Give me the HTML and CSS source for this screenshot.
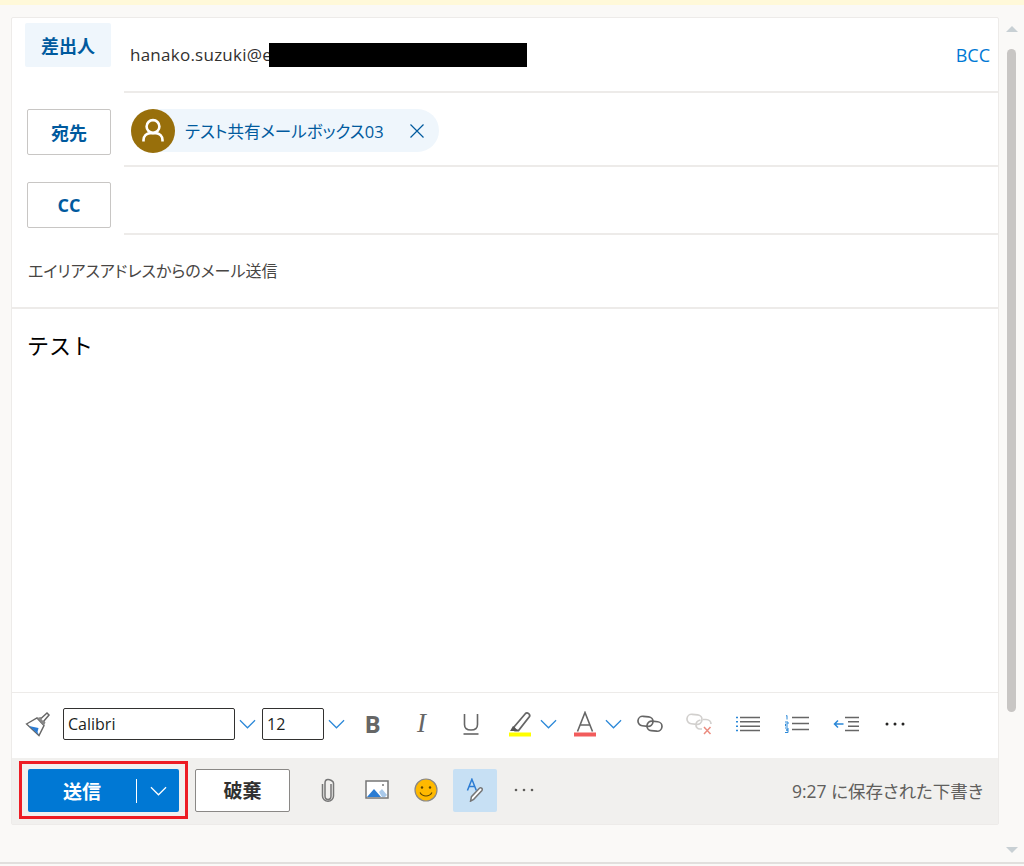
FILE: index.html
```html
<!DOCTYPE html>
<html lang="ja">
<head>
    <meta charset="UTF-8">
    <meta name="viewport" content="width=device-width, initial-scale=1.0">
    <title>メールの作成</title>
    <link rel="stylesheet" href="styles.css">
</head>
<body>
    <div class="notice"></div>
    <div class="main">
        <div class="composer">
            <div class="field-row from-row">
                <button class="field-btn active">差出人</button>
                <div class="field-value">
                    <span class="from-addr">hanako.suzuki@e</span><span class="redacted"></span>
                    <a class="bcc">BCC</a>
                </div>
            </div>
            <div class="field-row to-row">
                <button class="field-btn">宛先</button>
                <div class="field-value">
                    <div class="chip">
                        <span class="avatar">
                            <svg width="44" height="44" viewBox="0 0 44 44" fill="none" stroke="#fff" stroke-width="2.6">
                                <circle cx="22" cy="17.5" r="6.4"/>
                                <path d="M12.5 32.5v-1.5c0-4 3-6.8 6.5-6.8h6c3.5 0 6.500 2.800 6.500 6.800v1.500"/>
                            </svg>
                        </span>
                        <span class="chip-name">テスト共有メールボックス03</span>
                        <svg class="chip-x" width="16" height="16" viewBox="0 0 16 16" fill="none" stroke="#005a9e" stroke-width="1.200">
                            <path d="M1.500 1.500l13 13M14.500 1.500l-13 13"/>
                        </svg>
                    </div>
                </div>
            </div>
            <div class="field-row cc-row">
                <button class="field-btn">CC</button>
                <div class="field-value"></div>
            </div>
            <div class="subject">エイリアスアドレスからのメール送信</div>
            <div class="body-text">テスト</div>

            <div class="format-bar">
                <span class="tool brush">
                    <svg width="26" height="26" viewBox="0 0 26 26">
                        <path d="M1.500 13L12 7l7 7.500L14 24.500z" fill="#fff" stroke="#666" stroke-width="1.400"/>
                        <path d="M4 15l9.500 2-1 4 1.500 3z" fill="#2b7cd3"/>
                        <path d="M12 7l7 7.500 1.500-3-5-5.500z" fill="#888"/>
                        <path d="M16 7.500l6-5.500 2 2-5.500 6.500" fill="#fff" stroke="#666" stroke-width="1.500"/>
                    </svg>
                </span>
                <input class="font-input" type="text" value="Calibri">
                <span class="menu first-menu"><svg class="chev" width="17" height="10" viewBox="0 0 18 10"><path d="M1 1l8 8 8-8"/></svg></span>
                <input class="size-input" type="text" value="12">
                <span class="menu size-menu"><svg class="chev" width="17" height="10" viewBox="0 0 18 10"><path d="M1 1l8 8 8-8"/></svg></span>

                <span class="tool"><span class="glyph-b">B</span></span>
                <span class="tool"><span class="glyph-i">I</span></span>
                <span class="tool">
                    <svg width="20" height="24" viewBox="0 0 20 24" fill="none" stroke="#666" stroke-width="1.600">
                        <path d="M3.500 2v10.500c0 3.500 2.500 5.500 6.500 5.500s6.500-2 6.500-5.500V2"/>
                        <path d="M2.500 22h15"/>
                    </svg>
                </span>
                <span class="split">
                    <span class="split-icon">
                        <svg width="24" height="26" viewBox="0 0 24 26">
                            <path d="M6 16L17.500 2.500c1.800-1.800 5.300 1 3.800 3.300L10.500 19.500l-3.500 0z" fill="#fff" stroke="#666" stroke-width="1.800"/>
                            <path d="M5 15l5.500 5H2z" fill="#555"/>
                            <rect x="1" y="21.500" width="22" height="4" fill="#ffff00"/>
                        </svg>
                    </span>
                    <span class="menu"><svg class="chev" width="17" height="10" viewBox="0 0 18 10"><path d="M1 1l8 8 8-8"/></svg></span>
                </span>
                <span class="split">
                    <span class="split-icon">
                        <svg width="24" height="26" viewBox="0 0 24 26">
                            <path d="M4.500 20.500L12 1.500l7.500 19M7 14h10" fill="none" stroke="#666" stroke-width="1.600"/>
                            <rect x="1" y="21.500" width="22" height="4" fill="#f25c5c"/>
                        </svg>
                    </span>
                    <span class="menu"><svg class="chev" width="17" height="10" viewBox="0 0 18 10"><path d="M1 1l8 8 8-8"/></svg></span>
                </span>
                <span class="tool">
                    <svg width="26" height="18" viewBox="0 0 26 18" fill="none" stroke="#666" stroke-width="1.700">
                        <rect x="1" y="1.500" width="15" height="9.500" rx="4.700" transform="rotate(6 8 6)"/>
                        <rect x="10" y="6.500" width="15" height="9.500" rx="4.700" transform="rotate(6 18 11)"/>
                    </svg>
                </span>
                <span class="tool">
                    <svg width="26" height="22" viewBox="0 0 26 22" fill="none" stroke="#d2d0ce" stroke-width="1.700">
                        <rect x="1" y="1.500" width="15" height="9.500" rx="4.700" transform="rotate(6 8 6)"/>
                        <path d="M17 6.500h3c3 0 5 2 5 4.500M16 16h-2c-2.500 0-4.200-2-4-4.500 .2-2.300 2-4 4.500-4.500"/>
                        <path d="M18 14l6.500 7M24.500 14L18 21" stroke="#eb8c80" stroke-width="1.500"/>
                    </svg>
                </span>
                <span class="tool">
                    <svg width="24" height="16" viewBox="0 0 24 16" fill="none">
                        <path d="M4 1.500h20M4 5.800h20M4 10.200h20M4 14.500h20" stroke="#666" stroke-width="1.500"/>
                        <path d="M0 1.500h2M0 5.800h2M0 10.200h2M0 14.500h2" stroke="#2b88d8" stroke-width="1.500"/>
                    </svg>
                </span>
                <span class="tool">
                    <svg width="24" height="18" viewBox="0 0 24 18" fill="none">
                        <path d="M7 2.500h17M7 8.500h17M7 14.500h17" stroke="#666" stroke-width="1.500"/>
                        <path d="M1 1l1-.5v4M0 7h3v2H0.500v2H3M0 13h3v2H1h2v2.500H0" stroke="#2b88d8" stroke-width="1"/>
                    </svg>
                </span>
                <span class="tool">
                    <svg width="26" height="16" viewBox="0 0 26 16" fill="none">
                        <path d="M12 1.500h14M15 5.800h11M15 10.200h11M12 14.500h14" stroke="#666" stroke-width="1.500"/>
                        <path d="M10.500 8H1.500M5 4.500L1.500 8 5 11.500" stroke="#2b88d8" stroke-width="1.500"/>
                    </svg>
                </span>
                <span class="tool">
                    <svg class="dots" width="20" height="4" viewBox="0 0 20 4" fill="#252423">
                        <circle cx="2" cy="2" r="1.500"/><circle cx="10" cy="2" r="1.500"/><circle cx="18" cy="2" r="1.500"/>
                    </svg>
                </span>
            </div>

            <div class="action-bar">
                <div class="send-mark">
                    <div class="send-btn">
                        <span class="send-label">送信</span>
                        <span class="send-sep"></span>
                        <span class="send-menu">
                            <svg width="17" height="10" viewBox="0 0 18 10" fill="none" stroke="#fff" stroke-width="1.300"><path d="M1 1l8 8 8-8"/></svg>
                        </span>
                    </div>
                </div>
                <button class="discard-btn">破棄</button>
                <div class="action-tools">
                    <span class="action-tool">
                        <svg width="14" height="25" viewBox="0 0 14 25" fill="none" stroke="#767676" stroke-width="1.500">
                            <path d="M10 6v12c0 2-1.300 3.500-3 3.500S4 20 4 18V5c0-2 1.300-3.500 3-3.500S12.500 3 12.500 5v13c0 3-2.500 5.300-5.500 5.300"/>
                            <path d="M1.500 6v12c0 3 2.500 5.300 5.500 5.300"/>
                        </svg>
                    </span>
                    <span class="action-tool">
                        <svg width="24" height="20" viewBox="0 0 24 20">
                            <rect x="1" y="1" width="22" height="17" fill="#fff" stroke="#767676" stroke-width="1.500"/>
                            <path d="M2 17l7-8 7 8z" fill="#2b7cd3"/>
                            <path d="M14 12l3-3 5 6-2 2h-3z" fill="#a9c9ea"/>
                            <circle cx="18" cy="5" r="1" fill="#767676"/>
                        </svg>
                    </span>
                    <span class="action-tool">
                        <svg width="24" height="24" viewBox="0 0 24 24" fill="none">
                            <circle cx="12" cy="12" r="11" fill="#ffb900" stroke="#8a8886" stroke-width="1.200"/>
                            <circle cx="8" cy="9.500" r="1.200" fill="#5c4400"/>
                            <circle cx="16" cy="9.500" r="1.200" fill="#5c4400"/>
                            <path d="M6 14.500c1.500 2.500 3.500 3.500 6 3.500s4.500-1 6-3.500" stroke="#5c4400" stroke-width="1.200"/>
                        </svg>
                    </span>
                    <span class="action-tool selected">
                        <svg width="18" height="24" viewBox="0 0 20 27" fill="none">
                            <path d="M1.500 14L6.500 1.500l5 12.500M3 9.500h7" stroke="#2b7cd3" stroke-width="1.700"/>
                            <path d="M5 26l1-5 9-9.500c1.500-1.500 4 .5 2.800 2.500L8.500 24z" fill="#fff" stroke="#767676" stroke-width="1.700"/>
                        </svg>
                    </span>
                    <span class="action-tool">
                        <svg width="20" height="4" viewBox="0 0 20 4" fill="#605e5c">
                            <circle cx="2" cy="2" r="1.300"/><circle cx="10" cy="2" r="1.300"/><circle cx="18" cy="2" r="1.300"/>
                        </svg>
                    </span>
                </div>
                <div class="saved">9:27 に保存された下書き</div>
            </div>
        </div>
        <div class="scrollbar">
            <span class="arrow-up"></span>
            <span class="thumb"></span>
            <span class="arrow-down"></span>
        </div>
    </div>
    <div class="page-end"></div>
</body>
</html>
```

FILE: styles.css
```css
body {
    margin: 0;
    height: 866px;
    overflow: hidden;
    background: #faf9f7;
    font-family: "Open Sans", "Noto Sans CJK JP", sans-serif;
    font-feature-settings: "palt";
    color: #323130;
}
button, input {
    font-family: inherit;
    font-feature-settings: inherit;
}
.notice {
    height: 5px;
    background: #fff9d9;
}
.main {
    display: flex;
    height: 857px;
}
.composer {
    width: 987px;
    height: 806px;
    margin: 12px 0 0 11px;
    background: #fff;
    border: 1px solid #edebe9;
    border-radius: 2px;
    display: flex;
    flex-direction: column;
}

/* header rows */
.field-row {
    display: flex;
    align-items: flex-start;
}
.from-row {
    height: 75px;
}
.to-row {
    height: 74px;
}
.cc-row {
    height: 68px;
}
.field-btn {
    flex: none;
    width: 84px;
    height: 46px;
    margin-left: 15px;
    padding: 0;
    background: #fff;
    border: 1px solid #c8c6c4;
    border-radius: 2px;
    color: #005a9e;
    font-size: 18px;
    font-weight: 700;
}
.field-btn.active {
    width: 86px;
    height: 44px;
    margin: 5px 0 0 13px;
    background: #eff6fc;
    border: none;
}
.to-row .field-btn {
    margin-top: 16px;
}
.cc-row .field-btn {
    margin-top: 15px;
}
.field-value {
    flex: 1;
    height: 100%;
    margin-left: 13px;
    border-bottom: 2px solid #edebe9;
    box-sizing: border-box;
    display: flex;
    align-items: flex-start;
}
.from-row .field-value {
    align-items: center;
    padding: 0 8px 0 6px;
}
.from-addr {
    font-size: 17px;
    letter-spacing: 0.25px;
}
.redacted {
    width: 258px;
    height: 24px;
    margin-left: -3px;
    margin-top: 1px;
    background: #000;
}
.bcc {
    margin-left: auto;
    color: #0078d4;
    font-size: 18px;
}
.chip {
    display: flex;
    align-items: center;
    height: 43px;
    margin: 16px 0 0 7px;
    padding-right: 14px;
    background: #eff6fc;
    border-radius: 22px;
}
.avatar {
    width: 44px;
    height: 44px;
    background: #986f0b;
    border-radius: 50%;
}
.avatar svg {
    display: block;
}
.chip-name {
    margin-left: 10px;
    font-size: 16.5px;
    color: #005a9e;
}
.chip-x {
    margin-left: 25px;
}
.subject {
    height: 72px;
    padding-left: 16px;
    border-bottom: 2px solid #edebe9;
    box-sizing: content-box;
    font-size: 16px;
    line-height: 73px;
    color: #484644;
}
.body-text {
    flex: 1;
    padding: 20px 15px;
    font-size: 22px;
    font-feature-settings: normal;
    line-height: 32px;
    color: #000;
}

/* formatting toolbar */
.format-bar {
    height: 61px;
    padding-bottom: 4px;
    border-top: 1px solid #edebe9;
    display: flex;
    align-items: center;
}
.tool {
    flex: none;
    width: 49px;
    height: 32px;
    display: flex;
    align-items: center;
    justify-content: center;
}
.brush {
    width: 51px;
}
.font-input, .size-input {
    box-sizing: border-box;
    height: 32px;
    padding: 0 4px;
    background: #fff;
    border: 1px solid #323130;
    border-radius: 2px;
    font-size: 16px;
    color: #201f1e;
}
.font-input {
    width: 172px;
}
.size-input {
    width: 62px;
}
.menu {
    flex: none;
    width: 20px;
    height: 32px;
    display: flex;
    align-items: center;
    justify-content: center;
}
.first-menu {
    width: 24px;
    margin-right: 3px;
}
.size-menu {
    width: 24px;
}
.chev {
    fill: none;
    stroke: #2b88d8;
    stroke-width: 1.300;
}
.split {
    flex: none;
    display: flex;
    padding: 0 4px 0 7px;
}
.split + .split {
    padding: 0 2px 0 5px;
}
.split-icon {
    width: 36px;
    height: 32px;
    display: flex;
    align-items: center;
    justify-content: center;
}
.glyph-b {
    font-size: 24px;
    font-weight: 700;
    color: #666;
}
.glyph-i {
    font-family: "Liberation Serif", serif;
    font-size: 27px;
    font-style: italic;
    color: #666;
}

/* bottom actions */
.action-bar {
    height: 64px;
    background: #f1f0ee;
    display: flex;
    align-items: center;
    padding: 0 15px 2px 7px;
}
.send-mark {
    flex: none;
    box-sizing: border-box;
    width: 169px;
    height: 58px;
    padding: 5px 6px;
    border: 3px solid #ed1c24;
}
.send-btn {
    height: 43px;
    display: flex;
    align-items: center;
    background: #0078d4;
    border-radius: 2px;
    color: #fff;
}
.send-label {
    width: 108px;
    text-align: center;
    font-size: 19px;
    font-weight: 700;
}
.send-sep {
    width: 1px;
    height: 24px;
    background: #fff;
}
.send-menu {
    flex: 1;
    display: flex;
    justify-content: center;
}
.discard-btn {
    flex: none;
    width: 95px;
    height: 43px;
    margin-left: 7px;
    padding: 0;
    background: #fff;
    border: 1px solid #8a8886;
    border-radius: 2px;
    color: #323130;
    font-size: 19px;
    font-weight: 700;
}
.action-tools {
    display: flex;
    gap: 5px;
    margin-left: 16px;
}
.action-tool {
    width: 44px;
    height: 43px;
    display: flex;
    align-items: center;
    justify-content: center;
    border-radius: 2px;
}
.action-tool.selected {
    background: #c7e0f4;
}
.saved {
    margin-left: auto;
    font-size: 17.5px;
    color: #605e5c;
}

/* page scrollbar */
.scrollbar {
    width: 25px;
    display: flex;
    flex-direction: column;
    align-items: center;
}
.arrow-up {
    margin-top: 21px;
    border: 6px solid transparent;
    border-top: none;
    border-bottom: 6px solid #c8d0d4;
}
.thumb {
    width: 9px;
    height: 663px;
    margin-top: 17px;
    background: #c8c6c4;
    border-radius: 5px;
}
.arrow-down {
    margin-top: auto;
    margin-bottom: 9px;
    border: 6px solid transparent;
    border-bottom: none;
    border-top: 6px solid #c8d0d4;
}
.page-end {
    height: 4px;
    border-top: 2px solid #e1dfdd;
    box-sizing: border-box;
}
```
